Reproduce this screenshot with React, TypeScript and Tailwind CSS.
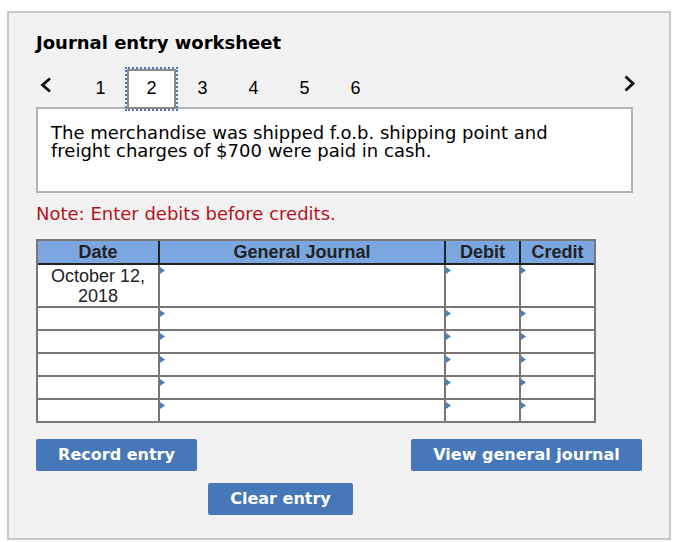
import React from "react";

const verdana = { fontFamily: '"DejaVu Sans", Verdana, sans-serif' };
const arial = { fontFamily: '"Liberation Sans", Arial, sans-serif' };

function Tri() {
  return (
    <svg width="5" height="7" viewBox="0 0 5 7" className="absolute left-0 top-[2px]">
      <polygon points="0,0 5,3.5 0,7" fill="#4a7fc1" />
    </svg>
  );
}

function Row({ h, last, children }: { h: string; last?: boolean; children?: React.ReactNode }) {
  return (
    <div className={`flex ${h} ${last ? "" : "border-b-2 border-[#777]"}`}>
      <div className="w-[120px] shrink-0 text-center text-[18px] leading-[20px] text-[#222] pt-[1px]" style={arial}>
        {children}
      </div>
      <div className="relative w-[286px] shrink-0 border-l-2 border-[#777] bg-white">
        <Tri />
      </div>
      <div className="relative w-[75px] shrink-0 border-l-2 border-[#777] bg-white">
        <Tri />
      </div>
      <div className="relative flex-1 border-l-2 border-[#777] bg-white">
        <Tri />
      </div>
    </div>
  );
}

function Btn({ children, w }: { children: React.ReactNode; w: string }) {
  return (
    <button
      className={`${w} h-[32px] rounded-[2px] bg-[#4677b9] text-white font-bold text-[16px] leading-[20px] pb-[1px]`}
      style={verdana}
    >
      {children}
    </button>
  );
}

export default function App() {
  return (
    <div className="w-[676px] h-[542px] bg-white pt-[11px] pl-[7px]">
      <div className="w-[664px] h-[529px] border-2 border-[#c8c8c8] bg-[#f2f2f2] pl-[27px]">
        <div className="pt-[19px] text-[18px] leading-[22px] font-bold text-black" style={verdana}>
          Journal entry worksheet
        </div>
        {/* tabs */}
        <div className="mt-[13px] flex items-start h-[44px]" style={arial}>
          <div className="w-[39px] pt-[10px] pl-[3px]">
            <svg width="14" height="16" viewBox="0 0 14 16">
              <polyline points="11,1.5 3.5,8 11,14.5" fill="none" stroke="#111" strokeWidth="2.8" />
            </svg>
          </div>
          {[1, 2, 3, 4, 5, 6].map((n) =>
            n === 2 ? (
              <div key={n} className="relative z-10 -ml-[1px] -mr-[1px] w-[53px] h-[44px] border-2 border-dotted border-[#4a7bc0]">
                <div className="h-full border-2 border-[#8a8a8a] bg-white flex items-center justify-center pb-[1px] text-[18px] text-black">
                  2
                </div>
              </div>
            ) : (
              <div key={n} className="w-[51px] h-[44px] flex items-center justify-center pb-[1px] text-[18px] text-black">
                {n}
              </div>
            )
          )}
          <div className="ml-auto mr-[33px] pt-[8px]">
            <svg width="13" height="17" viewBox="0 0 13 17">
              <polyline points="2.5,1.5 10,8.5 2.5,15.5" fill="none" stroke="#111" strokeWidth="2.8" />
            </svg>
          </div>
        </div>
        {/* question box */}
        <div
          className="-mt-[4px] w-[597px] h-[86px] border-2 border-[#b4b4b4] bg-white pl-[13px] pt-[15px] text-[18px] leading-[18px] text-black"
          style={verdana}
        >
          The merchandise was shipped f.o.b. shipping point and
          <br />
          freight charges of $700 were paid in cash.
        </div>
        <div className="mt-[10px] text-[18px] leading-[22px] text-[#b5121b]" style={verdana}>
          Note: Enter debits before credits.
        </div>
        {/* table */}
        <div className="mt-[14px] w-[560px] border-2 border-[#777] bg-white">
          <div
            className="flex h-[24px] bg-[#7ba6e0] border-b-2 border-[#222] text-[18px] font-bold text-[#222] leading-[22px]"
            style={arial}
          >
            <div className="w-[120px] shrink-0 text-center">Date</div>
            <div className="w-[286px] shrink-0 border-l-2 border-[#222] text-center">General Journal</div>
            <div className="w-[75px] shrink-0 border-l-2 border-[#222] text-center">Debit</div>
            <div className="flex-1 border-l-2 border-[#222] text-center">Credit</div>
          </div>
          <Row h="h-[43px]">
            October 12,
            <br />
            2018
          </Row>
          <Row h="h-[23px]" />
          <Row h="h-[23px]" />
          <Row h="h-[23px]" />
          <Row h="h-[23px]" />
          <Row h="h-[21px]" last />
        </div>
        {/* buttons */}
        <div className="mt-[16px] flex">
          <Btn w="w-[161px]">Record entry</Btn>
          <div className="ml-[214px]">
            <Btn w="w-[231px]">View general journal</Btn>
          </div>
        </div>
        <div className="mt-[12px] ml-[172px]">
          <Btn w="w-[145px]">Clear entry</Btn>
        </div>
      </div>
    </div>
  );
}
